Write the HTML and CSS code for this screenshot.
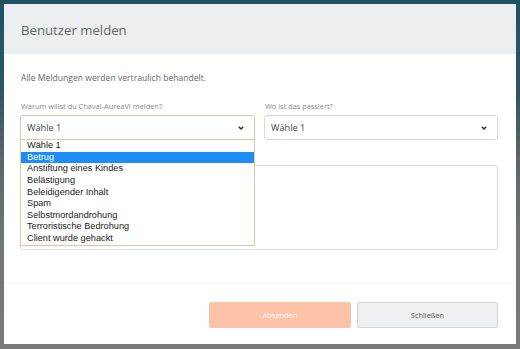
FILE: index.html
```html
<!DOCTYPE html>
<html lang="de">
<head>
<meta charset="utf-8">
<title>Benutzer melden</title>
<link rel="stylesheet" href="styles.css">
</head>
<body>
<div class="modal">
  <div class="modal-header">
    <h1 class="modal-title">Benutzer melden</h1>
  </div>
  <div class="modal-body">
    <p class="intro">Alle Meldungen werden vertraulich behandelt.</p>
    <div class="form-row">
      <div class="field">
        <label class="field-label">Warum willst du Chaval-AureaVI melden?</label>
        <div class="select-wrap">
          <div class="select focused">
            <span>Wähle 1</span>
            <svg class="chevron" width="6" height="4" viewBox="0 0 6 4"><path d="M0.8 0.8 L3 3 L5.2 0.8" fill="none" stroke="#333" stroke-width="1.5"/></svg>
          </div>
          <ul class="dropdown">
            <li>Wähle 1</li>
            <li class="active">Betrug</li>
            <li>Anstiftung eines Kindes</li>
            <li>Belästigung</li>
            <li>Beleidigender Inhalt</li>
            <li>Spam</li>
            <li>Selbstmordandrohung</li>
            <li>Terroristische Bedrohung</li>
            <li>Client wurde gehackt</li>
          </ul>
        </div>
      </div>
      <div class="field">
        <label class="field-label">Wo ist das passiert?</label>
        <div class="select">
          <span>Wähle 1</span>
          <svg class="chevron" width="6" height="4" viewBox="0 0 6 4"><path d="M0.8 0.8 L3 3 L5.2 0.8" fill="none" stroke="#333" stroke-width="1.5"/></svg>
        </div>
      </div>
    </div>
    <div class="textarea"></div>
  </div>
  <div class="modal-footer">
    <button class="btn btn-primary">Absenden</button>
    <button class="btn btn-secondary">Schließen</button>
  </div>
</div>
</body>
</html>
```
FILE: styles.css
```css
html, body {
  margin: 0;
  padding: 0;
}
body {
  width: 520px;
  height: 349px;
  overflow: hidden;
  background: linear-gradient(to bottom, #1f5366 0%, #2c5563 25%, #5a6669 45%, #727576 70%, #7a7a7a 100%);
  padding: 4px 4px 0 4px;
  box-sizing: border-box;
  font-family: "Open Sans", "Liberation Sans", sans-serif;
}
.modal {
  width: 512px;
  height: 340px;
  background: #fff;
  display: flex;
  flex-direction: column;
}
.modal-header {
  height: 50px;
  background: #eceff1;
  display: flex;
  align-items: center;
  padding: 0 17px;
  box-sizing: border-box;
}
.modal-title {
  margin: 0;
  font-size: 13.2px;
  font-weight: 400;
  color: #62676b;
  padding-top: 2px;
}
.modal-body {
  padding: 17px 18px 0 16px;
  flex: 1;
}
.intro {
  margin: 0;
  font-size: 8.6px;
  line-height: 14px;
  color: #6a6a6a;
  padding-left: 1px;
}
.form-row {
  display: grid;
  grid-template-columns: 235px 234px;
  column-gap: 9px;
  margin-top: 15px;
}
.field-label {
  display: block;
  font-size: 7.4px;
  line-height: 12px;
  color: #8a8a8a;
  margin-bottom: 3px;
  padding-left: 1px;
}
.select-wrap {
  position: relative;
}
.select {
  height: 25px;
  box-sizing: border-box;
  border: 1px solid #d8d8d8;
  border-radius: 3px;
  display: flex;
  align-items: center;
  justify-content: space-between;
  padding: 0 10px 0 6px;
  font-size: 9.2px;
  color: #444;
}
.select.focused {
  border-color: #e6c49e;
  border-radius: 3px 3px 0 0;
}
.chevron {
  display: block;
}
.dropdown {
  position: absolute;
  left: 0;
  top: 25px;
  width: 235px;
  box-sizing: border-box;
  margin: 0;
  padding: 0;
  list-style: none;
  background: #fff;
  border: 1px solid #e6c49e;
  border-top: none;
  font-family: "Liberation Sans", Arial, sans-serif;
  font-size: 9.2px;
  color: #222;
  z-index: 2;
}
.dropdown li {
  height: 11.65px;
  line-height: 11.65px;
  padding-left: 6px;
}
.dropdown li.active {
  background: #1e8cf5;
  color: #fff;
}
.textarea {
  margin-top: 25px;
  height: 85px;
  box-sizing: border-box;
  border: 1px solid #dcdcdc;
  border-radius: 3px;
}
.modal-footer {
  border-top: 1px solid #f3f3f3;
  display: flex;
  justify-content: flex-end;
  gap: 6px;
  padding: 18px 18px 16px 0;
}
.btn {
  width: 142px;
  height: 26px;
  box-sizing: border-box;
  border-radius: 2px;
  font-family: "Open Sans", sans-serif;
  font-size: 7.4px;
  padding: 0;
}
.btn-primary {
  background: #fdc2a8;
  border: 1px solid #fdc2a8;
  color: #fff;
}
.btn-secondary {
  width: 141px;
  background: #eef0f1;
  border: 1px solid #d2d4d5;
  color: #555;
}
```
